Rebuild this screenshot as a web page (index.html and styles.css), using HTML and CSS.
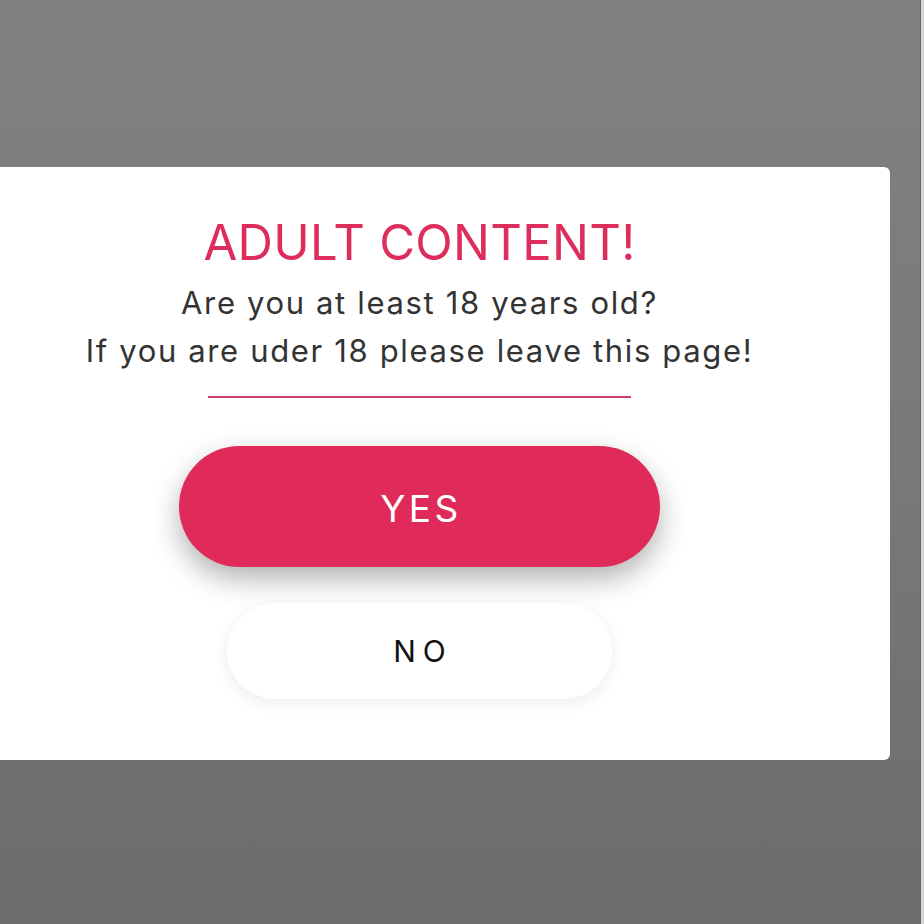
FILE: index.html
```html
<!DOCTYPE html>
<html lang="en">
<head>
<meta charset="utf-8">
<title>Adult content</title>
<link rel="stylesheet" href="styles.css">
</head>
<body>
<div class="overlay">
  <div class="modal">
    <h1 class="title">ADULT CONTENT!</h1>
    <p class="message">Are you at least 18 years old?<br>If you are uder 18 please leave this page!</p>
    <hr class="rule">
    <button class="btn btn-yes">YES</button>
    <button class="btn btn-no">NO</button>
  </div>
</div>
<div class="scrollbar"></div>
</body>
</html>
```
FILE: styles.css
```css
html, body {
  margin: 0;
  padding: 0;
  height: 100%;
  overflow: hidden;
}
body {
  background: linear-gradient(to bottom, #818181 0%, #797979 50%, #6c6c6c 100%);
  font-family: Inter, "Liberation Sans", sans-serif;
}
.overlay {
  display: flex;
  padding-top: 167px;
}
.modal {
  box-sizing: border-box;
  width: 941px;
  height: 593px;
  margin-left: -51px;
  background: #fff;
  border-radius: 6px;
  padding-top: 46px;
  display: flex;
  flex-direction: column;
  align-items: center;
}
.title {
  margin: 0;
  font-size: 49px;
  line-height: 59px;
  font-weight: 400;
  color: #dc2d5d;
  letter-spacing: 0.3px;
}
.message {
  margin: 7px 0 0;
  font-size: 31px;
  line-height: 48px;
  letter-spacing: 1.65px;
  color: #333;
  text-align: center;
}
.rule {
  margin: 21px 0 0;
  width: 423px;
  height: 2px;
  border: 0;
  background: #cf3f69;
}
.btn {
  font-family: inherit;
  border: 0;
  border-radius: 999px;
  cursor: pointer;
}
.btn-yes {
  margin-top: 48px;
  width: 481px;
  height: 121px;
  padding: 3px 0 0 3px;
  background: #e02a5a;
  color: #fff;
  font-size: 37px;
  letter-spacing: 3.5px;
  box-shadow: 0 12px 28px rgba(0, 0, 0, 0.3);
}
.btn-no {
  margin-top: 36px;
  width: 385px;
  height: 96px;
  padding: 0 0 0 7px;
  background: #fff;
  color: #111;
  font-size: 30px;
  letter-spacing: 7px;
  box-shadow: 0 4px 16px rgba(0, 0, 0, 0.08);
}
.scrollbar {
  position: fixed;
  top: 0;
  right: 0;
  width: 3px;
  height: 100%;
  background: #d4d4d4;
  border-left: 1px solid #6a6a6a;
}
```
